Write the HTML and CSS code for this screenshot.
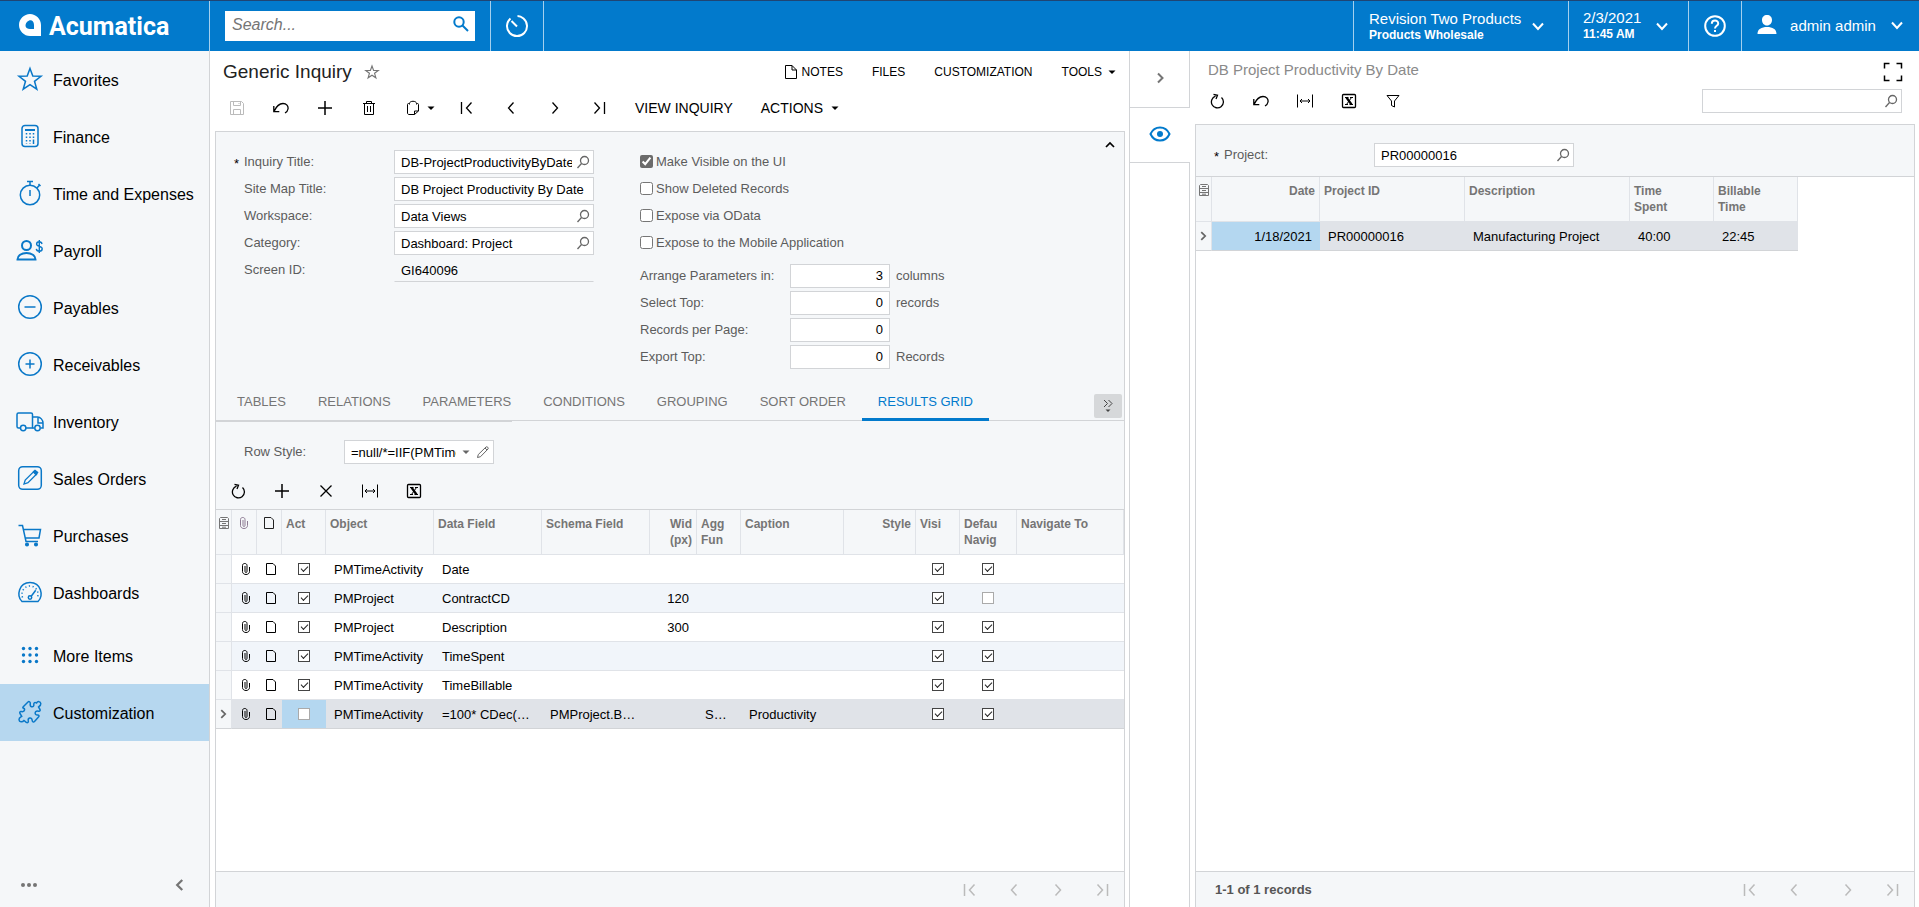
FILE: index.html
```html
<!DOCTYPE html>
<html lang="en">
<head>
    <meta charset="UTF-8">
    <meta name="viewport" content="width=device-width, initial-scale=1.0">
    <title>Generic Inquiry</title>
    <link rel="stylesheet" href="styles.css">
</head>
<body>

    <!-- Icon sprite -->
    <svg class="sprite" width="0" height="0" aria-hidden="true">
        <symbol id="i-star" viewBox="0 0 28 28"><path d="M14 3.500l2.800 7.600 8.200.2-6.500 5 2.300 7.900-6.800-4.600-6.800 4.600 2.300-7.900L3 11.300l8.200-.2z"/></symbol>
        <symbol id="i-calc" viewBox="0 0 28 28"><rect x="6" y="3.500" width="16" height="21" rx="3"/><path d="M9 8h10" stroke-width="2"/><path d="M10.500 11v11M14 11v11M17.500 11v5" stroke-dasharray="1.500 2"/><path d="M17.500 17.500v4.500"/></symbol>
        <symbol id="i-timer" viewBox="0 0 28 28"><circle cx="14" cy="16" r="9.700"/><path d="M14 11v6M11 2.500h6M14 3v3M21 9l2.500-3M22.500 5l2 2"/></symbol>
        <symbol id="i-payroll" viewBox="0 0 28 28"><circle cx="10.500" cy="9.500" r="4.500" stroke-width="2"/><path d="M1.500 23.500c0-4 4-6.500 9-6.500s9 2.500 9 6.500z" stroke-width="2"/><path d="M26 8c-.3-1.500-1.300-2.200-2.700-2.200s-2.700.7-2.700 2.200c0 3 5.600 1.700 5.600 4.700 0 1.600-1.300 2.500-2.900 2.500s-2.800-.8-3-2.400M23.300 4v13" stroke-width="1.400"/></symbol>
        <symbol id="i-minus" viewBox="0 0 28 28"><circle cx="14" cy="14" r="11.300"/><path d="M8.500 14h11"/></symbol>
        <symbol id="i-pluscircle" viewBox="0 0 28 28"><circle cx="14" cy="14" r="11.300"/><path d="M9.500 14h9M14 9.500v9"/></symbol>
        <symbol id="i-truck" viewBox="0 0 28 28"><path d="M4.500 21H2.500c-.8 0-1.500-.6-1.500-1.500V7.500C1 6.600 1.700 6 2.500 6H15c.8 0 1.500.6 1.500 1.500V21H10"/><path d="M16.500 10h5c3 0 5.500 3 5.500 6v5h-2.500M16.500 21h2"/><path d="M22 10.500V16h5"/><circle cx="7.200" cy="21" r="2.700"/><circle cx="21.500" cy="21" r="2.700"/></symbol>
        <symbol id="i-edit" viewBox="0 0 28 28"><rect x="2.700" y="2.700" width="22.600" height="22.600" rx="4"/><path d="M8 20l1.200-4L18 7.300l2.700 2.700-8.700 8.700z" stroke-width="1.300"/><path d="M17.500 8l2.500 2.500 1.500-2L19 6.500z" fill="currentColor"/></symbol>
        <symbol id="i-cart" viewBox="0 0 28 28"><path d="M2.500 4.500h4l3.500 16h12M7.500 8.500h17L23 17H9.300"/><circle cx="11" cy="23.500" r="1.300" fill="currentColor"/><circle cx="20" cy="23.500" r="1.300" fill="currentColor"/></symbol>
        <symbol id="i-gauge" viewBox="0 0 28 28"><path d="M6 23.500c-6-6-3-19 8-19s14 13 8 19z"/><path d="M6.500 19.500c-2-6 2-11.500 7.500-11.500s9.500 5.500 7.500 11.500" stroke-dasharray="1.200 2.500"/><circle cx="14" cy="19.500" r="1.700"/><path d="M15.200 18.200l4.500-6"/></symbol>
        <symbol id="i-dots9" viewBox="0 0 28 28"><g fill="currentColor" stroke="none"><circle cx="7.500" cy="7.500" r="1.700"/><circle cx="14" cy="7.500" r="1.700"/><circle cx="20.500" cy="7.500" r="1.700"/><circle cx="7.500" cy="14" r="1.700"/><circle cx="14" cy="14" r="1.700"/><circle cx="20.500" cy="14" r="1.700"/><circle cx="7.500" cy="20.500" r="1.700"/><circle cx="14" cy="20.500" r="1.700"/><circle cx="20.500" cy="20.500" r="1.700"/></g></symbol>
        <symbol id="i-puzzle" viewBox="0 0 28 28"><path d="M8 8l4-4c1-1 2.500 0 2.300 1.300-.3 1.600-.2 3 1.200 3.400 1.800.5 2.500-.8 2.300-2.200C17.600 4.500 19 4 20.500 5c1.200-2 4-1.800 4.300.5.200 1.800-1 2.500-2.300 3.500l1.500 2.500c.6 1-.3 2-1.300 1.700-1.700-.4-3.200 0-3.500 1.500-.3 1.600 1 2.400 2.300 2.300 1.500-.1 2 1 1 2l-4 4.500c-1 1-2.200.3-2.300-1-.2-1.600-1-2.800-2.600-2.400-1.500.4-1.600 1.600-1.300 2.800.4 1.400-.8 2.200-2 1.400l-2.300-1.800c-1.500 2-4.800 1.800-5-.7-.2-2 1.300-2.600 2.700-3.500L4 15.500c-.7-1 0-2.200 1.200-2 1.500.3 3 .2 3.300-1.300.3-1.400-.5-2-1.300-2.200-.8-.3-.2-1 .8-2z"/></symbol>
        <symbol id="i-chev-l" viewBox="0 0 16 16"><path d="M10 3.500L5.500 8l4.500 4.500"/></symbol>
        <symbol id="i-chev-r" viewBox="0 0 16 16"><path d="M6 3.500L10.500 8 6 12.500"/></symbol>
        <symbol id="i-chev-d" viewBox="0 0 16 16"><path d="M3 5.500L8 11l5-5.500"/></symbol>
        <symbol id="i-chev-u" viewBox="0 0 16 16"><path d="M4 10l4-4 4 4"/></symbol>
        <symbol id="i-first" viewBox="0 0 16 16"><path d="M2.500 2v12M12.500 2.500L7.500 8l5 5.500"/></symbol>
        <symbol id="i-prev" viewBox="0 0 16 16"><path d="M10.500 2.500L5.500 8l5 5.500"/></symbol>
        <symbol id="i-next" viewBox="0 0 16 16"><path d="M5.500 2.500l5 5.500-5 5.500"/></symbol>
        <symbol id="i-last" viewBox="0 0 16 16"><path d="M3.500 2.500l5 5.500-5 5.500M13.500 2v12"/></symbol>
        <symbol id="i-caret" viewBox="0 0 8 8"><path d="M.5 2.500h7L4 6z" fill="currentColor" stroke="none"/></symbol>
        <symbol id="i-save" viewBox="0 0 16 16"><path d="M1.500 1.500h11l2 2v11h-13zM4.500 1.500v4h7v-4M4.500 14.500v-5h7v5M10 3v1" stroke-width="1"/></symbol>
        <symbol id="i-undo" viewBox="0 0 16 16"><path d="M.8 6v5.700h5.500M1 11.400C3.500 6 6.500 3.500 10 3.500c3.500 0 5.500 2.500 5 5.500-.3 2-1.500 3.200-3 4"/></symbol>
        <symbol id="i-plus" viewBox="0 0 16 16"><path d="M8 1v14M1 8h14" stroke-width="1.500"/></symbol>
        <symbol id="i-x" viewBox="0 0 16 16"><path d="M2.500 2.500l11 11M13.500 2.500l-11 11"/></symbol>
        <symbol id="i-trash" viewBox="0 0 16 16"><path d="M2 3.500h12M5.500 3.500v-2h5v2M3.500 3.500v11h9v-11M6.500 6v6M9.500 6v6" stroke-width="1"/></symbol>
        <symbol id="i-clip" viewBox="0 0 16 16"><path d="M4.500 3.500h-1c-.6 0-1 .4-1 1V13c0 .8.500 1.500 1.500 1.500h5.500L13.500 11V4.500c0-.6-.4-1-1-1h-1M4.500 4.500v-1c0-3 7-3 7 0v1M9.500 14.500V11h4" stroke-width="1"/></symbol>
        <symbol id="i-refresh" viewBox="0 0 16 16"><path d="M12.500 4.500a6 6 0 1 1-6-1.300M4.500 1.300l4 1-1.500 3.700"/></symbol>
        <symbol id="i-fit" viewBox="0 0 16 16"><path d="M.5 1.500v13M15.500 1.500v13M3 8h10M5 6L3 8l2 2M11 6l2 2-2 2" stroke-width="1"/></symbol>
        <symbol id="i-excel" viewBox="0 0 16 16"><rect x="1.500" y="1.500" width="13" height="13" rx="1"/><path d="M5.500 4.500l5 7" stroke-width="2.200"/><path d="M10.500 4.500l-5 7M4 4.500h3.500M9 4.500h3M4 11.500h3M8.500 11.500H12" stroke-width="1"/></symbol>
        <symbol id="i-filter" viewBox="0 0 16 16"><path d="M2 2.500h12L9.500 8v6l-3-1.500V8z" stroke-width="1"/></symbol>
        <symbol id="i-lens" viewBox="0 0 14 14"><circle cx="8.500" cy="5.500" r="4"/><path d="M5.500 8.500l-4 4.500"/></symbol>
        <symbol id="i-search" viewBox="0 0 16 16"><circle cx="6" cy="6" r="4.700"/><path d="M9.500 9.500l5.500 5.500"/></symbol>
        <symbol id="i-doc" viewBox="0 0 16 16"><path d="M2.500 1.500H9L13.500 6v8.500h-11zM9 1.500V6h4.500"/></symbol>
        <symbol id="i-note" viewBox="0 0 14 14"><path d="M2.500 1.500h6.500l2.500 2.500v8.500h-9z"/></symbol>
        <symbol id="i-attach" viewBox="0 0 14 14"><path d="M6 4v5.500c0 1.300 2 1.300 2 0V3.500c0-2.700-4.500-2.700-4.500 0v6c0 4 7 4 7 0V5"/></symbol>
        <symbol id="i-config" viewBox="0 0 12 14"><path d="M1.500 2.500l1-1h7l1 1v10h-9zM1.500 5.500h9M1.500 9.500h9M4 3.500h4M4 7.500h4M4 11.200h4"/></symbol>
        <symbol id="i-pencil" viewBox="0 0 14 14"><path d="M1.500 12.500l.8-3L10 2c1-1 3 1 2 2l-7.500 7.700zM9 3l2 2"/></symbol>
        <symbol id="i-more" viewBox="0 0 16 16"><path d="M4 2l3.500 3.500L4 9M8.500 2L12 5.500 8.500 9"/><path d="M5.500 11.500h5L8 14z" fill="currentColor" stroke="none"/></symbol>
        <symbol id="i-eye" viewBox="0 0 22 16"><path d="M1.500 8C5.500-.7 16.500-.7 20.500 8 16.500 16.700 5.500 16.700 1.500 8z"/><circle cx="11" cy="8" r="3" fill="currentColor" stroke="none"/></symbol>
        <symbol id="i-expand" viewBox="0 0 20 20"><path d="M1.500 6.500v-5h5M13.500 1.500h5v5M18.500 13.500v5h-5M6.500 18.500h-5v-5"/></symbol>
        <symbol id="i-recent" viewBox="0 0 24 24"><path d="M18.500 4.500a10 10 0 1 1-13 0M12.500 2c2 0 4 .8 6 2.500M6.500 7l5.500 5.500"/></symbol>
        <symbol id="i-help" viewBox="0 0 24 24"><circle cx="12" cy="12" r="9.800"/><path d="M8.800 9.800c0-4.200 6.400-4.200 6.400-.4 0 2.400-3.200 2.400-3.200 5M12 16v2"/></symbol>
        <symbol id="i-user" viewBox="0 0 20 20"><path d="M10 0c3 0 5 2 5 5s-2 5.500-5 5.500S5 8 5 5s2-5 5-5zM.5 19c0-5 4-7 9.500-7s9.500 2 9.500 7z" fill="currentColor" stroke="none"/></symbol>
        <symbol id="i-logo" viewBox="0 0 22 22"><path fill-rule="evenodd" d="M11 0C5 0 0 5 0 11s5 11 11 11h11V11C22 5 17 0 11 0zM8 8c3-3 7-2 7 3v4h-4C6 15 5.500 10.500 8 8z" fill="currentColor" stroke="none"/></symbol>
    </svg>

    <header class="topbar">
        <a class="logo" href="#">
            <svg width="22" height="22"><use href="#i-logo"/></svg>
            <span>Acumatica</span>
        </a>
        <div class="search-wrap">
            <form class="search">
                <input type="text" placeholder="Search..." aria-label="Search">
                <button type="button" aria-label="Search"><svg width="16" height="16"><use href="#i-search"/></svg></button>
            </form>
        </div>
        <button class="top-item top-recent" type="button" aria-label="Recent"><svg width="24" height="24"><use href="#i-recent"/></svg></button>
        <div class="spacer"></div>
        <button class="top-item top-company" type="button">
            <span class="two-line"><span>Revision Two Products</span><b>Products Wholesale</b></span>
            <svg width="16" height="16"><use href="#i-chev-d"/></svg>
        </button>
        <button class="top-item top-date" type="button">
            <span class="two-line"><span>2/3/2021</span><b>11:45 AM</b></span>
            <svg width="16" height="16"><use href="#i-chev-d"/></svg>
        </button>
        <button class="top-item top-help" type="button" aria-label="Help"><svg width="24" height="24"><use href="#i-help"/></svg></button>
        <button class="top-item top-user" type="button">
            <svg width="20" height="20"><use href="#i-user"/></svg>
            <span>admin admin</span>
            <svg width="16" height="16"><use href="#i-chev-d"/></svg>
        </button>
    </header>

    <div class="workspace">

        <!-- Sidebar -->
        <nav class="sidebar">
            <a href="#"><svg><use href="#i-star"/></svg>Favorites</a>
            <a href="#"><svg><use href="#i-calc"/></svg>Finance</a>
            <a href="#"><svg><use href="#i-timer"/></svg>Time and Expenses</a>
            <a href="#"><svg><use href="#i-payroll"/></svg>Payroll</a>
            <a href="#"><svg><use href="#i-minus"/></svg>Payables</a>
            <a href="#"><svg><use href="#i-pluscircle"/></svg>Receivables</a>
            <a href="#"><svg><use href="#i-truck"/></svg>Inventory</a>
            <a href="#"><svg><use href="#i-edit"/></svg>Sales Orders</a>
            <a href="#"><svg><use href="#i-cart"/></svg>Purchases</a>
            <a href="#"><svg><use href="#i-gauge"/></svg>Dashboards</a>
            <a class="more" href="#"><svg><use href="#i-dots9"/></svg>More Items</a>
            <a class="active" href="#"><svg><use href="#i-puzzle"/></svg>Customization</a>
            <div class="sidebar-foot">
                <button type="button" aria-label="Menu options"><i></i><i></i><i></i></button>
                <button type="button" aria-label="Collapse menu"><svg width="18" height="18"><use href="#i-chev-l"/></svg></button>
            </div>
        </nav>

        <!-- Inquiry editor -->
        <main class="main">
            <div class="title-row">
                <h1>Generic Inquiry</h1>
                <button class="fav" type="button" aria-label="Add to favorites"><svg width="16" height="16"><use href="#i-star"/></svg></button>
                <div class="title-menu">
                    <button type="button"><svg width="16" height="16"><use href="#i-doc"/></svg>NOTES</button>
                    <button type="button">FILES</button>
                    <button type="button">CUSTOMIZATION</button>
                    <button type="button">TOOLS<svg class="caret" width="8" height="8"><use href="#i-caret"/></svg></button>
                </div>
            </div>

            <div class="toolbar">
                <button type="button" aria-label="Save" disabled><svg><use href="#i-save"/></svg></button>
                <button type="button" aria-label="Undo"><svg><use href="#i-undo"/></svg></button>
                <button type="button" aria-label="Add"><svg><use href="#i-plus"/></svg></button>
                <button type="button" aria-label="Delete"><svg><use href="#i-trash"/></svg></button>
                <button class="wide" type="button" aria-label="Clipboard"><svg><use href="#i-clip"/></svg><svg class="caret"><use href="#i-caret"/></svg></button>
                <button type="button" aria-label="First"><svg><use href="#i-first"/></svg></button>
                <button type="button" aria-label="Previous"><svg><use href="#i-prev"/></svg></button>
                <button type="button" aria-label="Next"><svg><use href="#i-next"/></svg></button>
                <button type="button" aria-label="Last"><svg><use href="#i-last"/></svg></button>
                <button class="text" type="button">VIEW INQUIRY</button>
                <button class="text" type="button">ACTIONS<svg class="caret"><use href="#i-caret"/></svg></button>
            </div>

            <section class="panel">
                <form class="form">
                    <div class="form-col">
                        <div class="row">
                            <label for="title"><span class="req">*</span>Inquiry Title:</label>
                            <div class="field"><input type="text" id="title" value="DB-ProjectProductivityByDate"><svg><use href="#i-lens"/></svg></div>
                        </div>
                        <div class="row">
                            <label for="sitemap">Site Map Title:</label>
                            <div class="field"><input type="text" id="sitemap" value="DB Project Productivity By Date"></div>
                        </div>
                        <div class="row">
                            <label for="workspace">Workspace:</label>
                            <div class="field"><input type="text" id="workspace" value="Data Views"><svg><use href="#i-lens"/></svg></div>
                        </div>
                        <div class="row">
                            <label for="category">Category:</label>
                            <div class="field"><input type="text" id="category" value="Dashboard: Project"><svg><use href="#i-lens"/></svg></div>
                        </div>
                        <div class="row">
                            <label for="screen">Screen ID:</label>
                            <div class="field readonly"><input type="text" id="screen" value="GI640096" readonly></div>
                        </div>
                    </div>
                    <div class="form-col">
                        <label class="check"><input type="checkbox" checked>Make Visible on the UI</label>
                        <label class="check"><input type="checkbox">Show Deleted Records</label>
                        <label class="check"><input type="checkbox">Expose via OData</label>
                        <label class="check"><input type="checkbox">Expose to the Mobile Application</label>
                        <div class="numbers">
                            <label for="cols">Arrange Parameters in:</label><div class="field"><input type="text" id="cols" value="3"></div><span>columns</span>
                            <label for="top">Select Top:</label><div class="field"><input type="text" id="top" value="0"></div><span>records</span>
                            <label for="perpage">Records per Page:</label><div class="field"><input type="text" id="perpage" value="0"></div><span></span>
                            <label for="export">Export Top:</label><div class="field"><input type="text" id="export" value="0"></div><span>Records</span>
                        </div>
                    </div>
                    <button class="collapse" type="button" aria-label="Collapse form"><svg width="16" height="16"><use href="#i-chev-u"/></svg></button>
                </form>

                <div class="tabs">
                    <button type="button">TABLES</button>
                    <button type="button">RELATIONS</button>
                    <button type="button">PARAMETERS</button>
                    <button type="button">CONDITIONS</button>
                    <button type="button">GROUPING</button>
                    <button type="button">SORT ORDER</button>
                    <button class="active" type="button">RESULTS GRID</button>
                    <button class="tabs-more" type="button" aria-label="More tabs"><svg width="16" height="16"><use href="#i-more"/></svg></button>
                </div>

                <div class="style-row">
                    <label for="rowstyle">Row Style:</label>
                    <div class="field">
                        <select id="rowstyle"><option>=null/*=IIF(PMTimeActivity</option></select>
                        <svg class="caret"><use href="#i-caret"/></svg>
                        <svg><use href="#i-pencil"/></svg>
                    </div>
                </div>

                <div class="toolbar">
                    <button type="button" aria-label="Refresh"><svg><use href="#i-refresh"/></svg></button>
                    <button type="button" aria-label="Add row"><svg><use href="#i-plus"/></svg></button>
                    <button type="button" aria-label="Delete row"><svg><use href="#i-x"/></svg></button>
                    <button type="button" aria-label="Fit to screen"><svg><use href="#i-fit"/></svg></button>
                    <button type="button" aria-label="Export to Excel"><svg><use href="#i-excel"/></svg></button>
                </div>

                <div class="grid-area">
                    <table class="grid">
                        <colgroup>
                            <col class="w16"><col class="w25"><col class="w25"><col class="w44"><col class="w108"><col class="w108"><col class="w108"><col class="w47"><col class="w44"><col class="w103"><col class="w72"><col class="w44"><col class="w57"><col>
                        </colgroup>
                        <thead>
                            <tr>
                                <th class="ico"><svg class="cfg"><use href="#i-config"/></svg></th>
                                <th class="ico faded"><svg><use href="#i-attach"/></svg></th>
                                <th class="ico dark"><svg><use href="#i-note"/></svg></th>
                                <th>Act</th>
                                <th>Object</th>
                                <th>Data Field</th>
                                <th>Schema Field</th>
                                <th class="num">Wid<br>(px)</th>
                                <th>Agg<br>Fun</th>
                                <th>Caption</th>
                                <th class="num">Style</th>
                                <th>Visi</th>
                                <th>Defau<br>Navig</th>
                                <th>Navigate To</th>
                            </tr>
                        </thead>
                        <tbody>
                            <tr>
                                <td></td><td><svg><use href="#i-attach"/></svg></td><td><svg><use href="#i-note"/></svg></td>
                                <td><input type="checkbox" aria-label="Active" checked></td>
                                <td>PMTimeActivity</td><td>Date</td><td></td><td class="num"></td><td></td><td></td><td></td>
                                <td><input type="checkbox" aria-label="Visible" checked></td><td class="nav"><input type="checkbox" aria-label="Default Navigation" checked></td><td></td>
                            </tr>
                            <tr>
                                <td></td><td><svg><use href="#i-attach"/></svg></td><td><svg><use href="#i-note"/></svg></td>
                                <td><input type="checkbox" aria-label="Active" checked></td>
                                <td>PMProject</td><td>ContractCD</td><td></td><td class="num">120</td><td></td><td></td><td></td>
                                <td><input type="checkbox" aria-label="Visible" checked></td><td class="nav"><input type="checkbox" aria-label="Default Navigation"></td><td></td>
                            </tr>
                            <tr>
                                <td></td><td><svg><use href="#i-attach"/></svg></td><td><svg><use href="#i-note"/></svg></td>
                                <td><input type="checkbox" aria-label="Active" checked></td>
                                <td>PMProject</td><td>Description</td><td></td><td class="num">300</td><td></td><td></td><td></td>
                                <td><input type="checkbox" aria-label="Visible" checked></td><td class="nav"><input type="checkbox" aria-label="Default Navigation" checked></td><td></td>
                            </tr>
                            <tr>
                                <td></td><td><svg><use href="#i-attach"/></svg></td><td><svg><use href="#i-note"/></svg></td>
                                <td><input type="checkbox" aria-label="Active" checked></td>
                                <td>PMTimeActivity</td><td>TimeSpent</td><td></td><td class="num"></td><td></td><td></td><td></td>
                                <td><input type="checkbox" aria-label="Visible" checked></td><td class="nav"><input type="checkbox" aria-label="Default Navigation" checked></td><td></td>
                            </tr>
                            <tr>
                                <td></td><td><svg><use href="#i-attach"/></svg></td><td><svg><use href="#i-note"/></svg></td>
                                <td><input type="checkbox" aria-label="Active" checked></td>
                                <td>PMTimeActivity</td><td>TimeBillable</td><td></td><td class="num"></td><td></td><td></td><td></td>
                                <td><input type="checkbox" aria-label="Visible" checked></td><td class="nav"><input type="checkbox" aria-label="Default Navigation" checked></td><td></td>
                            </tr>
                            <tr class="selected">
                                <td><svg><use href="#i-chev-r"/></svg></td><td><svg><use href="#i-attach"/></svg></td><td><svg><use href="#i-note"/></svg></td>
                                <td class="current"><input type="checkbox" aria-label="Active"></td>
                                <td>PMTimeActivity</td><td>=100* CDec(…</td><td>PMProject.B…</td><td class="num"></td><td>S…</td><td>Productivity</td><td></td>
                                <td><input type="checkbox" aria-label="Visible" checked></td><td class="nav"><input type="checkbox" aria-label="Default Navigation" checked></td><td></td>
                            </tr>
                        </tbody>
                    </table>
                </div>

                <footer class="pager">
                    <button type="button" aria-label="First page"><svg><use href="#i-first"/></svg></button>
                    <button type="button" aria-label="Previous page"><svg><use href="#i-prev"/></svg></button>
                    <button type="button" aria-label="Next page"><svg><use href="#i-next"/></svg></button>
                    <button type="button" aria-label="Last page"><svg><use href="#i-last"/></svg></button>
                </footer>
            </section>
        </main>

        <!-- Side panel switcher -->
        <aside class="strip">
            <button class="strip-toggle" type="button" aria-label="Collapse side panel"><svg width="16" height="16"><use href="#i-chev-r"/></svg></button>
            <button class="strip-view" type="button" aria-label="Preview"><svg width="22" height="16"><use href="#i-eye"/></svg></button>
            <div class="strip-rest"></div>
        </aside>

        <!-- Side panel -->
        <section class="side">
            <div class="side-title">
                <h2>DB Project Productivity By Date</h2>
                <button type="button" aria-label="Full screen"><svg width="20" height="20"><use href="#i-expand"/></svg></button>
            </div>
            <div class="toolbar">
                <button type="button" aria-label="Refresh"><svg><use href="#i-refresh"/></svg></button>
                <button type="button" aria-label="Undo"><svg><use href="#i-undo"/></svg></button>
                <button type="button" aria-label="Fit to screen"><svg><use href="#i-fit"/></svg></button>
                <button type="button" aria-label="Export to Excel"><svg><use href="#i-excel"/></svg></button>
                <button type="button" aria-label="Filter"><svg><use href="#i-filter"/></svg></button>
                <div class="field side-search"><input type="text" aria-label="Filter records"><svg><use href="#i-lens"/></svg></div>
            </div>
            <div class="panel">
                <div class="row side-form">
                    <label for="project"><span class="req">*</span>Project:</label>
                    <div class="field"><input type="text" id="project" value="PR00000016"><svg><use href="#i-lens"/></svg></div>
                </div>
                <div class="grid-area">
                    <table class="grid narrow">
                        <colgroup><col class="w16"><col class="w108"><col class="w145"><col class="w165"><col class="w84"><col class="w84"></colgroup>
                        <thead>
                            <tr>
                                <th class="ico"><svg class="cfg"><use href="#i-config"/></svg></th>
                                <th class="num">Date</th>
                                <th>Project ID</th>
                                <th>Description</th>
                                <th>Time<br>Spent</th>
                                <th>Billable<br>Time</th>
                            </tr>
                        </thead>
                        <tbody>
                            <tr class="selected">
                                <td><svg><use href="#i-chev-r"/></svg></td><td class="num current">1/18/2021</td><td>PR00000016</td><td>Manufacturing Project</td><td>40:00</td><td>22:45</td>
                            </tr>
                        </tbody>
                    </table>
                </div>
                <footer class="pager">
                    <b>1-1 of 1 records</b>
                    <button type="button" aria-label="First page"><svg><use href="#i-first"/></svg></button>
                    <button class="prev" type="button" aria-label="Previous page"><svg><use href="#i-prev"/></svg></button>
                    <button type="button" aria-label="Next page"><svg><use href="#i-next"/></svg></button>
                    <button type="button" aria-label="Last page"><svg><use href="#i-last"/></svg></button>
                </footer>
            </div>
        </section>
    </div>

</body>
</html>
```
FILE: styles.css
```css
* {
    box-sizing: border-box;
}

body {
    margin: 0;
    height: 100vh;
    display: flex;
    flex-direction: column;
    font-family: Arial, "Liberation Sans", sans-serif;
    font-size: 13px;
    color: #000;
    background-color: #fff;
    overflow: hidden;
}

button, input, select {
    font: inherit;
    color: inherit;
}

button {
    display: flex;
    align-items: center;
    justify-content: center;
    padding: 0;
    border: none;
    background: none;
    cursor: pointer;
}

svg {
    display: block;
    flex: none;
    fill: none;
    stroke: currentColor;
    stroke-width: 1.5;
}

.sprite {
    position: absolute;
}

h1, h2 {
    margin: 0;
    font-weight: normal;
}

/* Top bar */
.topbar {
    flex: none;
    display: flex;
    height: 51px;
    border-top: 1px solid #1f4573;
    background-color: #027acc;
    color: #fff;
    font-size: 15px;
}

.logo {
    display: flex;
    align-items: center;
    gap: 8px;
    width: 209px;
    padding: 0 0 2px 19px;
    color: #fff;
    text-decoration: none;
    font-family: Roboto, sans-serif;
    font-size: 25px;
    font-weight: 700;
}

.logo span {
    padding-top: 3px;
}

.search-wrap {
    display: flex;
    align-items: center;
    width: 281px;
    padding: 0 15px 1px;
    border-left: 1px solid #a5d0ee;
}

.search {
    flex: 1;
    display: flex;
    height: 30px;
    background-color: #fff;
}

.search input {
    flex: 1;
    min-width: 0;
    padding: 0 7px 2px;
    border: none;
    outline: none;
    background: none;
    font-size: 16px;
    font-style: italic;
}

.search input::placeholder {
    color: #757575;
}

.search button {
    width: 28px;
    padding-bottom: 3px;
    color: #027acc;
}

.search svg {
    stroke-width: 2;
}

.top-item {
    border-left: 1px solid #a5d0ee;
    white-space: nowrap;
}

.top-recent {
    width: 54px;
    border-right: 1px solid #a5d0ee;
}

.top-recent svg, .top-help svg {
    stroke-width: 2;
}

.spacer {
    flex: 1;
}

.two-line {
    display: flex;
    flex-direction: column;
    text-align: left;
    line-height: 18px;
}

.two-line b {
    font-size: 12px;
    line-height: 14px;
}

.top-company, .top-date, .top-user {
    justify-content: space-between;
}

.top-company svg, .top-date svg, .top-user svg {
    stroke-width: 2;
}

.top-company {
    width: 215px;
    padding: 0 22px 0 15px;
}

.top-date {
    width: 120px;
    padding: 0 18px 0 14px;
}

.top-date .two-line {
    padding-bottom: 3px;
}

.top-help {
    width: 53px;
}

.top-user {
    width: 178px;
    padding: 0 14px 2px 15px;
}

/* Page columns */
.workspace {
    flex: 1;
    min-height: 0;
    display: grid;
    grid-template-columns: 210px minmax(0, 920fr) 60px minmax(0, 729fr);
    grid-template-rows: minmax(0, 1fr);
}

/* Sidebar */
.sidebar {
    display: flex;
    flex-direction: column;
    border-right: 1px solid #d2d4d7;
    background-color: #f5f7f9;
}

.sidebar a {
    display: flex;
    align-items: center;
    gap: 9px;
    height: 57px;
    padding: 2px 0 0 16px;
    color: #000;
    font-size: 16px;
    text-decoration: none;
}

.sidebar a svg {
    width: 28px;
    height: 28px;
    margin-bottom: 4px;
    color: #0a78c8;
}

.sidebar a.more {
    margin-top: 6px;
}

.sidebar a.active {
    background-color: #b6d7ef;
}

.sidebar-foot {
    display: flex;
    justify-content: space-between;
    align-items: center;
    margin-top: auto;
    height: 44px;
    padding: 0 20px 0 21px;
    color: #757575;
}

.sidebar-foot button {
    gap: 2px;
}

.sidebar-foot i {
    width: 4px;
    height: 4px;
    border-radius: 50%;
    background-color: #757575;
}

.sidebar-foot svg {
    stroke-width: 2;
}

/* Editor */
.main {
    display: flex;
    flex-direction: column;
    padding: 0 4px 0 5px;
    border-right: 1px solid #d2d4d7;
}

.title-row {
    flex: none;
    display: flex;
    align-items: center;
    height: 42px;
    padding: 0 9px 0 8px;
}

.title-row h1 {
    font-size: 19px;
    color: #222;
}

.fav {
    margin-left: 12px;
    color: #757575;
}

.fav svg {
    stroke-width: 2;
}

.title-menu {
    display: flex;
    gap: 29px;
    margin-left: auto;
}

.title-menu button {
    gap: 3px;
    font-size: 12px;
}

.title-menu svg {
    stroke-width: 1;
}

.title-menu .caret {
    margin-left: 3px;
}

.toolbar {
    flex: none;
    display: flex;
    align-items: center;
    height: 30px;
}

.toolbar button {
    width: 44px;
    height: 30px;
}

.toolbar button svg {
    width: 16px;
    height: 16px;
    stroke-width: 1.3;
}

.toolbar button .caret {
    width: 8px;
    height: 8px;
}

.toolbar button:disabled {
    color: #bbb;
}

.toolbar .wide {
    width: 54px;
    gap: 6px;
    padding-left: 4px;
}

.toolbar .text {
    width: auto;
    gap: 8px;
    padding: 0 14px;
    font-size: 14px;
}

.panel {
    flex: 1;
    min-height: 0;
    display: flex;
    flex-direction: column;
    margin-top: 8px;
    border: 1px solid #d2d4d7;
    border-bottom: none;
    background-color: #f5f7f9;
}

/* Form fields */
.form {
    display: flex;
    gap: 46px;
    padding: 18px 6px 13px 17px;
    color: #5c5c5c;
}

.form-col {
    display: flex;
    flex-direction: column;
    gap: 3px;
}

.row {
    display: grid;
    grid-template-columns: 161px 200px;
    color: #5c5c5c;
}

.row label {
    display: flex;
    height: 24px;
    padding-left: 11px;
    line-height: 24px;
}

.req {
    width: 10px;
    margin-left: -10px;
    padding-top: 2px;
    color: #000;
}

.field {
    display: flex;
    align-items: center;
    gap: 4px;
    height: 24px;
    padding: 0 3px 0 6px;
    border: 1px solid #d2d4d7;
    background-color: #fff;
    color: #000;
}

.field input, .field select {
    flex: 1;
    min-width: 0;
    width: 100%;
    height: 22px;
    padding: 0;
    border: none;
    outline: none;
    background: none;
}

.field select {
    appearance: none;
    overflow: hidden;
}

.field svg {
    width: 14px;
    height: 14px;
    color: #666;
    stroke-width: 1.3;
}

.field .caret {
    width: 8px;
    height: 8px;
}

.field.readonly {
    border-color: transparent;
    border-bottom-color: #d2d4d7;
    background: none;
}

.check {
    display: flex;
    align-items: center;
    gap: 3px;
    height: 24px;
    padding-bottom: 2px;
}

.check input {
    width: 13px;
    height: 13px;
    margin: 0;
    accent-color: #6b6b6b;
}

.numbers {
    display: grid;
    grid-template-columns: 150px 100px auto;
    gap: 3px 0;
    margin-top: 6px;
    line-height: 24px;
}

.numbers input {
    text-align: right;
}

.numbers .field {
    padding-right: 6px;
}

.numbers span {
    padding-left: 6px;
}

.collapse {
    width: 16px;
    height: 16px;
    margin: -13px 0 0 auto;
    color: #000;
}

.collapse svg {
    stroke-width: 1.7;
}

/* Tabs */
.tabs {
    position: relative;
    flex: none;
    display: flex;
    height: 39px;
    padding-left: 5px;
    border-bottom: 1px solid #d2d4d7;
}

.tabs::after {
    content: "";
    position: absolute;
    left: 0;
    bottom: -2px;
    width: 296px;
    height: 1px;
    background-color: #d2d4d7;
}

.tabs button {
    height: 39px;
    padding: 2px 16px 0;
    border-bottom: 3px solid transparent;
    color: #757575;
}

.tabs button.active {
    color: #027acc;
    border-bottom-color: #027acc;
}

.tabs .tabs-more {
    width: 28px;
    height: 24px;
    margin: 12px 2px 0 auto;
    padding: 0;
    border: none;
    border-radius: 2px;
    background-color: #d6d8da;
    color: #444;
}

.tabs-more svg {
    stroke-width: 1;
}

.style-row {
    display: flex;
    padding: 19px 0 12px 28px;
    color: #5c5c5c;
    line-height: 24px;
}

.style-row label {
    width: 100px;
}

.style-row .field {
    width: 150px;
    gap: 6px;
}

.style-row .field svg:last-child {
    stroke-width: 1;
}

/* Grids */
.grid-area {
    flex: 1;
    min-height: 0;
    overflow: hidden;
    border-top: 1px solid #d2d4d7;
    background-color: #fff;
}

.toolbar + .grid-area {
    margin-top: 3px;
}

.grid {
    width: 100%;
    table-layout: fixed;
    border-spacing: 0;
}

.grid.narrow {
    width: 602px;
}

.w16 { width: 16px; }
.w25 { width: 25px; }
.w44 { width: 44px; }
.w47 { width: 47px; }
.w57 { width: 57px; }
.w72 { width: 72px; }
.w84 { width: 84px; }
.w103 { width: 103px; }
.w108 { width: 108px; }
.w145 { width: 145px; }
.w165 { width: 165px; }

.grid th {
    height: 45px;
    padding: 6px 4px 0;
    border-right: 1px solid #e0e3e8;
    border-bottom: 1px solid #e0e3e8;
    background-color: #f5f7f9;
    color: #757575;
    font-size: 12px;
    line-height: 16px;
    text-align: left;
    vertical-align: top;
}

.grid th.num {
    text-align: right;
}

.grid th.ico {
    padding: 6px 0 0;
}

.grid th svg {
    width: 14px;
    height: 14px;
    margin: 0 auto;
    stroke-width: 1;
}

.grid th .cfg {
    width: 12px;
}

.grid th.faded {
    color: #8d7a93;
}

.grid th.dark {
    color: #222;
}

.grid td {
    height: 29px;
    padding: 0 8px;
    border-bottom: 1px solid #e0e3e8;
    overflow: hidden;
    white-space: nowrap;
}

.grid td svg {
    width: 14px;
    height: 14px;
    margin-left: -1px;
    stroke-width: 1;
}

.grid td:first-child {
    padding: 0;
    border-right: 1px solid #e0e3e8;
    background-color: #f5f7f9;
    color: #666;
}

.grid td:first-child svg {
    margin: 0;
    stroke-width: 2;
}

.grid td.num {
    text-align: right;
}

.grid td.nav {
    padding-right: 10px;
}

.grid tbody tr:nth-child(even) {
    background-color: #f1f5fa;
}

.grid tbody tr.selected {
    background-color: #e0e3e8;
}

.selected td {
    border-bottom-color: #d2d4d7;
}

.grid td.current {
    background-color: #b4d7f0;
}

.grid td input {
    appearance: none;
    display: block;
    width: 12px;
    height: 12px;
    margin: 0 auto;
    border: 1px solid #aaa;
    background-color: #fff;
}

.grid td input:checked {
    border-color: #444;
}

.grid td input:checked::before {
    content: "";
    display: block;
    width: 6px;
    height: 3px;
    margin: 2px 0 0 2px;
    border: solid #222;
    border-width: 0 0 1px 1px;
    transform: rotate(-45deg);
}

/* Pager */
.pager {
    flex: none;
    display: flex;
    align-items: center;
    justify-content: flex-end;
    height: 36px;
    border-top: 1px solid #d2d4d7;
}

.pager b {
    margin-right: auto;
    padding-left: 19px;
    color: #555;
}

.pager button {
    width: 44px;
    height: 34px;
    color: #bbb;
}

.pager .prev {
    margin-right: 10px;
}

.pager svg {
    width: 16px;
    height: 16px;
}

/* Side panel */
.strip {
    display: flex;
    flex-direction: column;
}

.strip-toggle {
    height: 57px;
    padding-bottom: 3px;
    border-right: 1px solid #d2d4d7;
    border-bottom: 1px solid #d2d4d7;
    color: #757575;
}

.strip-toggle svg {
    stroke-width: 2;
}

.strip-view {
    height: 55px;
    padding-bottom: 3px;
    border-bottom: 1px solid #d2d4d7;
    color: #027acc;
}

.strip-view svg {
    stroke-width: 2;
}

.strip-rest {
    flex: 1;
    border-right: 1px solid #d2d4d7;
}

.side {
    display: flex;
    flex-direction: column;
    padding: 0 4px 0 5px;
}

.side-title {
    flex: none;
    display: flex;
    align-items: center;
    justify-content: space-between;
    height: 35px;
    padding: 6px 12px 0 13px;
}

.side-title h2 {
    padding-bottom: 4px;
    font-size: 15px;
    color: #8a8a8a;
}

.side-search {
    width: 200px;
    margin: 0 13px 0 auto;
}

.side-form {
    padding: 18px 0 9px 17px;
}
```
